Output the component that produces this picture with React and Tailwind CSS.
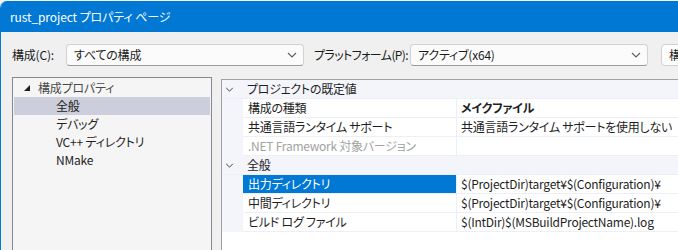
import React from 'react'

const FONT = "font-['Noto_Sans_CJK_JP','Noto_Sans',sans-serif] [font-feature-settings:'palt']"

const treeItems = [
  { label: '全般', selected: true },
  { label: 'デバッグ' },
  { label: 'VC++ ディレクトリ' },
  { label: 'NMake' },
]

const groups = [
  {
    title: 'プロジェクトの既定値',
    rows: [
      { name: '構成の種類', value: 'メイクファイル', bold: true },
      { name: '共通言語ランタイム サポート', value: '共通言語ランタイム サポートを使用しない' },
      { name: '.NET Framework 対象バージョン', value: '', disabled: true },
    ],
  },
  {
    title: '全般',
    rows: [
      { name: '出力ディレクトリ', value: '$(ProjectDir)target¥$(Configuration)¥', selected: true },
      { name: '中間ディレクトリ', value: '$(ProjectDir)target¥$(Configuration)¥' },
      { name: 'ビルド ログ ファイル', value: '$(IntDir)$(MSBuildProjectName).log' },
    ],
  },
]

function Chevron({ className }) {
  return (
    <svg viewBox="0 0 10 6" className={className} fill="none" stroke="currentColor" strokeWidth="1.1">
      <polyline points="1,1 5,5 9,1" />
    </svg>
  )
}

function Select({ value }) {
  return (
    <div className="flex h-[22px] w-[238px] shrink-0 items-center justify-between rounded-[4px] border border-[#d2d2d2] border-b-[#9a9a9a] bg-[#fbfbfb] pl-[7px] pr-[6px]">
      <span className="whitespace-nowrap text-[12px] text-[#1b1b1b]">{value}</span>
      <Chevron className="h-[6px] w-[10px] text-[#5f5f5f]" />
    </div>
  )
}

export default function App() {
  return (
    <div className={`h-[250px] w-[678px] overflow-hidden bg-[#f3f3f3] pt-px ${FONT}`}>
      <div className="flex h-[249px] flex-col overflow-hidden rounded-tl-[7px] border-l border-[#0078d4] bg-[#f0f0f0]">
        <div className="flex h-[31px] shrink-0 items-center bg-[#0078d4] pl-[9px] text-[12px] tracking-[-0.1px] text-white">
          rust_project プロパティ ページ
        </div>

        <div className="mt-[12px] flex h-[22px] items-center whitespace-nowrap text-[12px] tracking-[-0.2px] text-[#1b1b1b]">
          <span className="ml-[11px] w-[54px] shrink-0">構成(C):</span>
          <Select value="すべての構成" />
          <span className="ml-[10px] w-[96px] shrink-0 tracking-[-0.6px]">プラットフォーム(P):</span>
          <Select value="アクティブ(x64)" />
          <div className="ml-[13px] flex h-[22px] w-[120px] shrink-0 items-center rounded-[4px] border border-[#d0d0d0] bg-[#fdfdfd] pl-[7px]">
            構成マネージャー(O)...
          </div>
        </div>

        <div className="mt-[11px] flex flex-1 items-start pl-[11px]">
          <div className="h-[200px] w-[200px] shrink-0 border border-[#838790] bg-[#f5f5f5] px-px pt-px text-[12px] tracking-[-0.2px] text-[#1e1e1e]">
            <div className="flex h-[18px] items-center">
              <svg viewBox="0 0 6 6" className="ml-[10px] h-[6px] w-[6px]">
                <polygon points="6,0 6,6 0,6" fill="#1e1e1e" />
              </svg>
              <span className="ml-[8px] text-[#4a4a4a]">構成プロパティ</span>
            </div>
            {treeItems.map((t) => (
              <div
                key={t.label}
                className={`flex h-[18px] items-center pl-[42px] ${t.selected ? 'bg-[#cccedb]' : ''}`}
              >
                {t.label}
              </div>
            ))}
          </div>

          <div className="ml-[9px] mt-[2px] h-[200px] flex-1 whitespace-nowrap border border-r-0 border-[#a0a0a0] bg-white text-[12px] tracking-[-0.25px] text-[#1e1e1e]">
            {groups.map((g) => (
              <div key={g.title} className="bg-[#f3f5fa]">
                <div className="flex h-[19px] items-center border-b border-[#eceff5]">
                  <Chevron className="ml-[3px] h-[5px] w-[9px] text-[#333]" />
                  <span className="ml-[13px]">{g.title}</span>
                </div>
                {g.rows.map((r) => (
                  <div key={r.name} className="ml-[21px] flex h-[19px] border-b border-[#eceff5] bg-white">
                    <div
                      className={`flex w-[214px] items-center border-r border-[#eceff5] pl-[5px] ${
                        r.selected ? 'bg-[#0078d4] text-white' : r.disabled ? 'text-[#a2a2a2]' : ''
                      }`}
                    >
                      {r.name}
                    </div>
                    <div className={`flex flex-1 items-center pl-[4px] ${r.bold ? 'font-bold' : ''}`}>
                      {r.value}
                    </div>
                  </div>
                ))}
              </div>
            ))}
          </div>
        </div>
      </div>
    </div>
  )
}
